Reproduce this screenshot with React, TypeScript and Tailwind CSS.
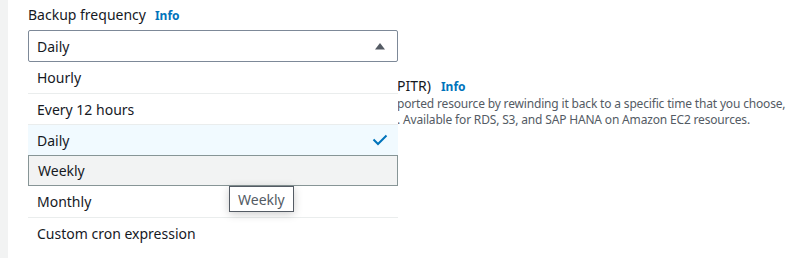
import React from "react";

const options = ["Hourly", "Every 12 hours", "Daily", "Weekly", "Monthly", "Custom cron expression"];

export default function App() {
  return (
    <div
      className="flex w-[786px] h-[258px] overflow-hidden bg-white text-[#16191f]"
      style={{ fontFamily: '"Noto Sans", "Open Sans", Arial, sans-serif' }}
    >
      <div className="w-[8px] shrink-0 bg-[#f2f3f3]" />
      <div className="relative flex-1 pl-[20px]">
        <div className="flex items-baseline gap-[9px] pt-[4px] h-[26px]">
          <span className="text-[14px] leading-[22px]">Backup frequency</span>
          <span className="text-[12px] font-bold text-[#0073bb]">Info</span>
        </div>
        <div className="mt-[4px] w-[370px] h-[32px] border border-[#7d8998] rounded-[2px] flex items-center justify-between pl-[8px] pr-[11px]">
          <span className="text-[14px]">Daily</span>
          <svg width="12" height="8" viewBox="0 0 12 8">
            <path d="M1 7.5 L6 1 L11 7.5 Z" fill="#545b64" />
          </svg>
        </div>
        <div className="pl-[369px] pt-[14px]">
          <div className="flex items-baseline gap-[10px]">
            <span className="text-[14px] leading-[20px]">PITR)</span>
            <span className="text-[12px] font-bold text-[#0073bb]">Info</span>
          </div>
          <div className="text-[12px] leading-[16px] text-[#545b64] whitespace-nowrap tracking-[-0.17px]">
            <div>ported resource by rewinding it back to a specific time that you choose,</div>
            <div>. Available for RDS, S3, and SAP HANA on Amazon EC2 resources.</div>
          </div>
        </div>

        <div className="absolute left-[20px] top-[62px] w-[370px] bg-white">
          {options.map((o, i) => {
            const selected = o === "Daily";
            const hovered = o === "Weekly";
            return (
              <div
                key={o}
                className={
                  "h-[31px] flex items-center justify-between pl-[9px] pr-[11px] text-[14px] " +
                  (hovered
                    ? "bg-[#f2f3f3] border border-[#879596] pl-[8px]"
                    : selected
                    ? "bg-[#f1faff] border-t border-[#eaeded]"
                    : i === 0
                    ? ""
                    : options[i - 1] === "Weekly"
                    ? ""
                    : "border-t border-[#eaeded]")
                }
              >
                <span>{o}</span>
                {selected && (
                  <svg width="16" height="12" viewBox="0 0 16 12" className="mr-[-1px]">
                    <path d="M1.5 5.5 L6 10 L14.5 1.5" fill="none" stroke="#0073bb" strokeWidth="2" />
                  </svg>
                )}
              </div>
            );
          })}
        </div>

        <div className="absolute left-[221px] top-[186px] h-[26px] px-[8px] flex items-center border border-[#545b64] bg-white text-[14px] text-[#545b64] shadow-[0_2px_10px_rgba(0,0,0,0.2)]">
          Weekly
        </div>
      </div>
    </div>
  );
}
